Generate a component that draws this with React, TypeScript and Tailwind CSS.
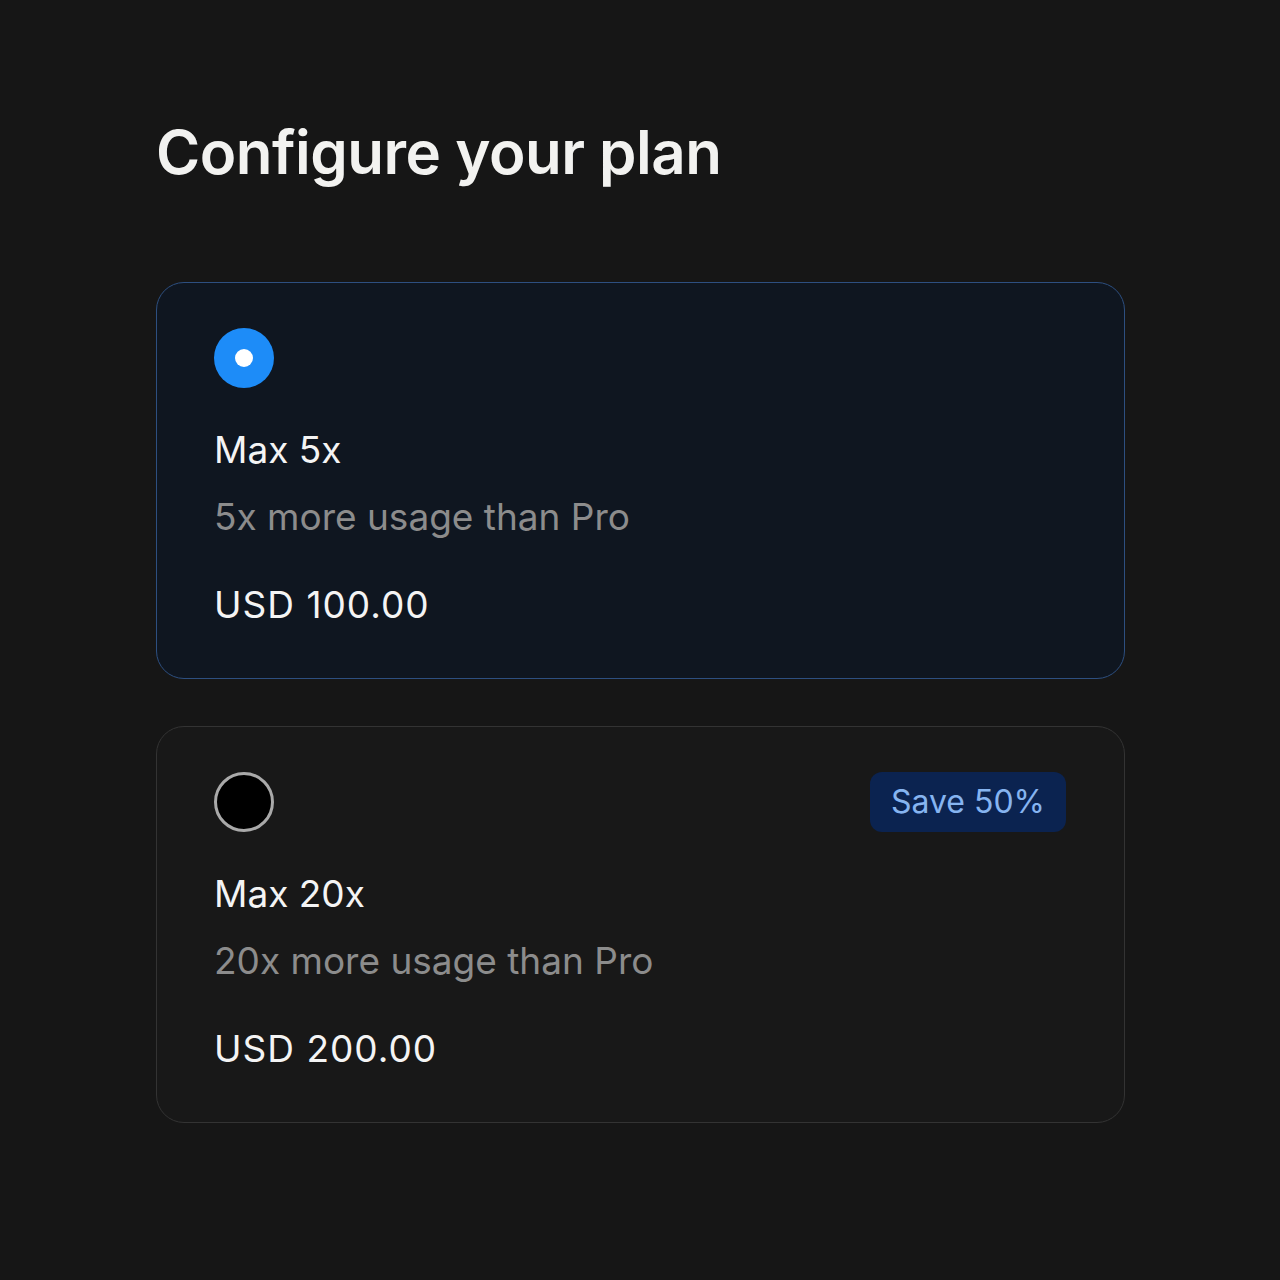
import React from 'react';

type Plan = {
  name: string;
  desc: string;
  price: string;
  selected: boolean;
  badge?: string;
};

const plans: Plan[] = [
  { name: 'Max 5x', desc: '5x more usage than Pro', price: 'USD 100.00', selected: true },
  { name: 'Max 20x', desc: '20x more usage than Pro', price: 'USD 200.00', selected: false, badge: 'Save 50%' },
];

const Radio: React.FC<{ checked: boolean }> = ({ checked }) =>
  checked ? (
    <div className="w-[60px] h-[60px] rounded-full bg-[#1d8cf8] flex items-center justify-center">
      <div className="w-[18px] h-[18px] rounded-full bg-white" />
    </div>
  ) : (
    <div className="w-[60px] h-[60px] rounded-full bg-black border-[3px] border-[#a9a9a9]" />
  );

const PlanCard: React.FC<{ plan: Plan }> = ({ plan }) => (
  <div
    className={
      plan.selected
        ? 'rounded-[28px] border border-[#2d4f80] bg-[#0f1620] pl-[57px] pr-[58px] pt-[45px] pb-[49px]'
        : 'rounded-[28px] border border-[#333333] bg-[#181818] pl-[57px] pr-[58px] pt-[45px] pb-[49px]'
    }
  >
    <div className="flex items-center justify-between">
      <Radio checked={plan.selected} />
      {plan.badge && (
        <span className="h-[60px] px-[21px] rounded-[12px] bg-[#0b2350] text-[#86b4f0] text-[32px] leading-[60px]">
          {plan.badge}
        </span>
      )}
    </div>
    <div className="mt-[38px] text-[37px] leading-[48px] text-[#f4f4f4]">{plan.name}</div>
    <div className="mt-[19px] text-[37px] leading-[48px] text-[#8c8c8c]">{plan.desc}</div>
    <div className="mt-[40px] text-[37px] leading-[48px] tracking-[1px] text-[#f4f4f4]">{plan.price}</div>
  </div>
);

export default function App() {
  return (
    <div className="min-h-[1280px] bg-[#161616] font-['Inter',sans-serif] pl-[156px] pr-[155px] pt-[112px]">
      <h1 className="text-[60px] leading-[80px] font-semibold tracking-[-0.5px] text-[#f2f2f0]">Configure your plan</h1>
      <div className="mt-[90px] flex flex-col gap-[47px]">
        {plans.map(p => (
          <PlanCard key={p.name} plan={p} />
        ))}
      </div>
    </div>
  );
}
